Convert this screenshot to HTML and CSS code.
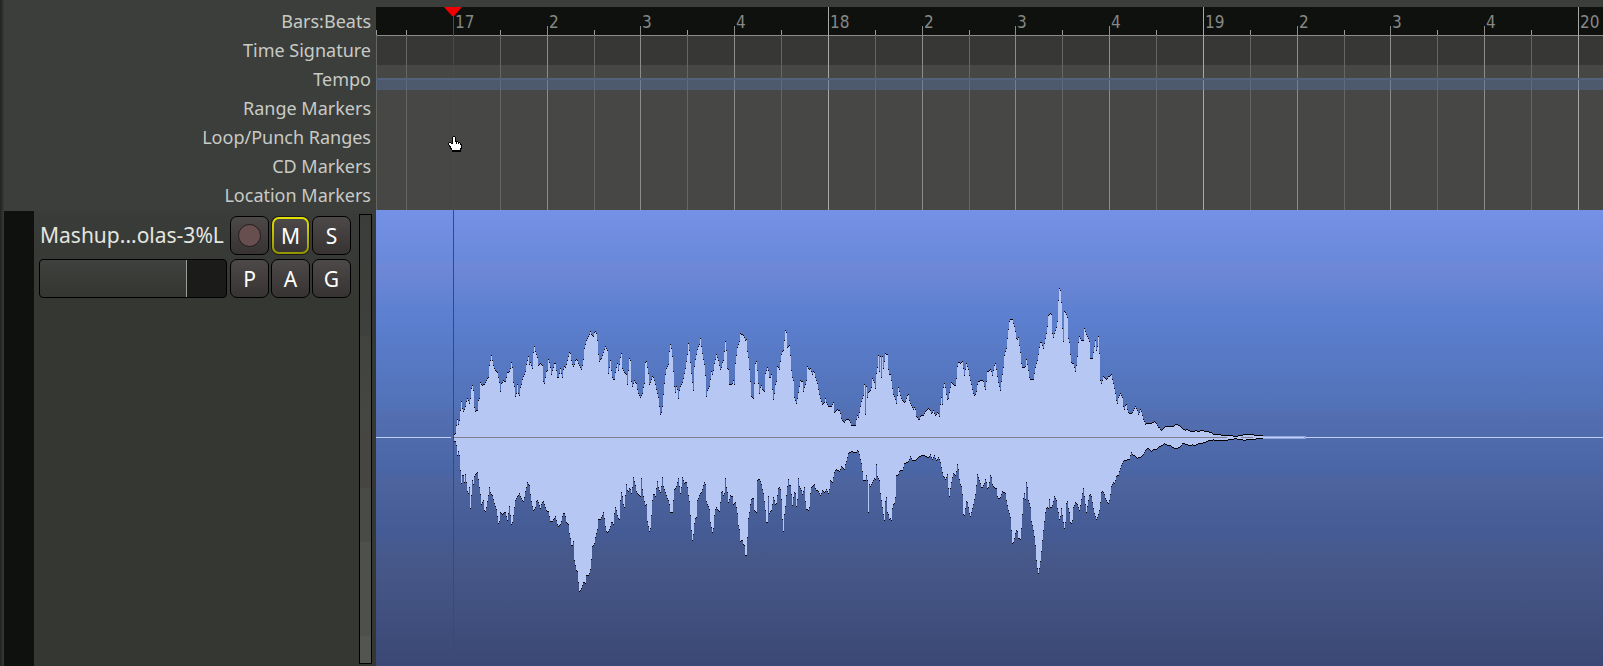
FILE: index.html
```html
<!DOCTYPE html>
<html lang="en">
<head>
<meta charset="utf-8">
<title>Editor</title>
<link rel="stylesheet" href="styles.css">
</head>
<body>
<main class="editor">
  <section class="rulers">
    <ul class="ruler-names">
      <li>Bars:Beats</li>
      <li>Time Signature</li>
      <li>Tempo</li>
      <li>Range Markers</li>
      <li>Loop/Punch Ranges</li>
      <li>CD Markers</li>
      <li>Location Markers</li>
    </ul>
    <div class="ruler-canvas" id="ruler">
      <div class="lane lane-bars"></div>
      <div class="lane lane-meter"></div>
      <div class="lane lane-tempo"><div class="tempo-curve"></div></div>
    </div>
  </section>
  <section class="track">
    <div class="track-strip"></div>
    <div class="track-header">
      <div class="controls">
        <span class="track-name">Mashup...olas-3%L</span>
        <button class="btn" type="button" aria-label="Record"><span class="rec-dot"></span></button>
        <button class="btn btn-mute" type="button" aria-pressed="true">M</button>
        <button class="btn" type="button">S</button>
        <input class="fader" type="range" min="0" max="100" value="79" aria-label="Gain">
        <button class="btn" type="button">P</button>
        <button class="btn" type="button">A</button>
        <button class="btn" type="button">G</button>
      </div>
      <div class="level"></div>
    </div>
    <div class="region">
      <svg class="wave" width="1227" height="456" shape-rendering="crispEdges" aria-hidden="true">
        <rect class="wave-axis" x="0" y="227" width="75" height="1"/>
        <rect class="wave-axis" x="930" y="227" width="4000" height="1"/>
        <rect class="wave-tail" x="887" y="226" width="43" height="3"/>
        <rect class="wave-axis" x="887" y="227" width="41" height="1"/>
        <path id="fill" class="wave-fill"/>
        <path id="edge" class="wave-edge"/>
        <rect class="wave-zero" x="78" y="227" width="773" height="1"/>
        <rect class="wave-zero" x="865" y="227" width="12" height="1"/>
      </svg>
    </div>
  </section>
  <div class="playhead">
    <svg class="playhead-cap" width="18" height="10" viewBox="0 0 18 10" aria-hidden="true"><path fill="#f00000" d="M0 0H18L10 9H8Z"/></svg>
  </div>
  <svg class="pointer" width="15" height="16" viewBox="0 0 15 16" shape-rendering="crispEdges" aria-hidden="true">
    <path fill="#000" d="M5 0H7V1H8V5H10V6H12V7H13V8H14V13H13V16H4V14H3V13H2V11H1V9H0V7H1V6H3V7H4V1H5z"/>
    <path fill="#fff" d="M5 1h2v5h1v2h1V6h1v2h1V7h1v2h1V8v4h-1v2H4v-2H3v-2H2V9H1V7h2v1h2z"/>
  </svg>
</main>
<script src="wave.js"></script>
</body>
</html>
```
FILE: styles.css
```css
* { box-sizing: border-box; }
body {
  margin: 0;
  background: #3c3e3b;
  font-family: "Noto Sans", sans-serif;
  overflow: hidden;
}
.editor {
  position: relative;
  display: flex;
  flex-direction: column;
  min-height: 100vh;
  padding-top: 7px;
  background: linear-gradient(90deg, #222221, #333331 3px, #3c3e3b 4px);
}
.rulers {
  display: grid;
  grid-template-columns: 376px 1fr;
}
.ruler-names {
  margin: 0;
  padding: 0 5px 0 0;
  list-style: none;
  text-align: right;
  color: #c8cac6;
  font-size: 18px;
  line-height: 29px;
}
.ruler-canvas {
  position: relative;
  display: flex;
  flex-direction: column;
  background: #474745;
  overflow: hidden;
}
.lane-bars { height: 29px; background: #0f110e; border-bottom: 1px solid #8b8b89; }
.lane-meter { height: 29px; background: #373735; }
.lane-tempo { position: relative; z-index: 1; height: 25px; padding-top: 13px; }
.tempo-curve {
  height: 12px;
  background: rgba(84, 110, 156, .45);
  border-top: 2px solid #53617a;
}
.tick { position: absolute; top: 0; bottom: 0; width: 1px; background: #a8a8a6; }
.tick-beat { top: 19px; background: #8c8c8a; }
.tick-half { top: 23px; background: linear-gradient(#9a9a98 5px, #666664 5px); }
.tick-label {
  position: absolute;
  left: 2px;
  top: 6px;
  color: #868884;
  font: 17px/18px "DejaVu Sans Condensed", "DejaVu Sans", sans-serif;
}
.tick-beat .tick-label { top: -13px; }

.track {
  flex: 1;
  display: grid;
  grid-template-columns: 30px 342px 1fr;
  margin-left: 4px;
  min-height: 456px;
}
.track-strip { margin-top: 1px; background: #0f110e; }
.track-header {
  display: flex;
  gap: 8px;
  padding: 4px 4px 2px 5px;
  border-top: 1px solid #3c3e3b;
  background: linear-gradient(#3a3c39, #353733 90px, #353733);
}
.controls {
  flex: 1;
  display: grid;
  grid-template-columns: 1fr 39px 39px 39px;
  grid-auto-rows: 39px;
  gap: 4px 2px;
  align-content: start;
  padding-top: 1px;
}
.track-name {
  padding-left: 1px;
  color: #e4e6e0;
  font-size: 21px;
  line-height: 38px;
  white-space: nowrap;
}
.btn {
  display: flex;
  align-items: center;
  justify-content: center;
  padding: 0;
  border: 1px solid #000;
  border-radius: 7px;
  background: linear-gradient(#4d4948, #373332);
  color: #fff;
  font: 21px/30px "Noto Sans", sans-serif;
}
.btn-mute {
  margin: 1px;
  border: 2px solid transparent;
  background: linear-gradient(#4d4948, #373332) padding-box, linear-gradient(#e2e200, #939300) border-box;
  box-shadow: 0 0 0 1px #1a1a1a;
}
.rec-dot {
  width: 23px;
  height: 23px;
  border: 1px solid #241c1c;
  border-radius: 50%;
  background: #684f4f;
}
.fader {
  appearance: none;
  width: auto;
  height: 39px;
  margin: 0 1px 0 0;
  border: 1px solid #000;
  border-radius: 4px;
  background:
    linear-gradient(90deg, transparent 79%, #1b1c1a 79%),
    linear-gradient(#3f413e, #343632);
}
.fader::-webkit-slider-thumb { appearance: none; width: 1px; height: 37px; background: #9a9c98; }
.level {
  width: 13px;
  margin-top: -1px;
  border: 1px solid #000;
  background: linear-gradient(#3b3d3a, #3e403d 27%, #41433f 27%, #454743 48%, #474541 48%, #474541 61%, #494b47 61%, #494b47 73%, #4e504c 73%, #4e504c 94%, #535551 94%);
}
.region {
  overflow: hidden;
  background: linear-gradient(#7491e6, #6b89da 50px, #6f88d7 56px, #5c7fcf 107px, #5272b8 195px, #546fb1 203px, #4a66a6 260px, #4d649f 270px, #445b95 323px, #47598b 343px, #3b4875 456px);
}
.wave { display: block; }
.wave-fill { fill: #b6c7f4; }
.wave-edge { fill: #000; }
.wave-axis { fill: #c0cff6; }
.wave-tail { fill: #8fa6de; }
.wave-zero { fill: #7f7f8e; }

.playhead {
  position: absolute;
  top: 7px;
  bottom: 0;
  left: 453px;
  width: 1px;
}
.playhead::after {
  content: "";
  position: absolute;
  inset: 0;
  background: #2340e6;
}
.playhead-cap { position: absolute; top: 0; left: -9px; }
.pointer { position: absolute; left: 448px; top: 136px; }
```
FILE: wave.js
```js
const ruler = document.getElementById('ruler');

function addTick(x, kind, label) {
  const tick = document.createElement('div');
  tick.className = 'tick tick-' + kind;
  tick.style.left = x + 'px';
  if (label) {
    const text = document.createElement('span');
    text.className = 'tick-label';
    text.textContent = label;
    tick.append(text);
  }
  ruler.append(tick);
}

// One bar is 375px wide; bar 17 begins 77px into the canvas.
function drawTicks() {
  ruler.querySelectorAll('.tick').forEach(tick => tick.remove());
  addTick(0, 'half');
  for (let k = -1; ; k++) {
    const x = 77 + Math.round(k * 46.875 - 0.1);
    if (x >= ruler.clientWidth) break;
    if (k % 8 === 0) addTick(x, 'bar', String(17 + k / 8));
    else if (k % 2 === 0) addTick(x, 'beat', String(1 + (k % 8) / 2));
    else addTick(x, 'half');
  }
}
drawTicks();
window.addEventListener('resize', drawTicks);

// Peak data in thirds of a pixel. Each block: canvas offset, zero level,
// first and last sample, then "time,level" pairs for both envelopes.
const blocks = [
  { at: 69, zero: 352, from: 27, to: 600,
    up: '26,346 32,340 34,316 37,298 40,312 43,300 46,270 49,244 52,265 55,274 60,264 64,244 67,236 72,244 74,258 76,236 79,206 82,197 85,212 88,262 91,274 97,270 100,242 103,236 106,188 112,196 120,190 127,176 131,172 133,136 136,122 139,106 142,122 145,136 149,148 157,156 160,172 163,186 166,214 169,190 172,188 176,180 180,190 183,176 187,158 193,154 196,146 199,127 202,142 205,188 208,200 211,228 215,216 217,192 220,220 223,226 226,202 230,190 233,172 240,160 244,134 250,110 253,134 256,127 262,146 265,96 268,79 271,95 277,112 280,136 287,130 292,136 296,200 300,180 303,154 307,152 310,118 314,128 318,154 319,162 325,142 328,130 332,130 335,160 338,180 343,160 346,146 352,172 356,138 362,142 368,118 373,97 377,102 380,130 386,142 392,115 397,122 403,136 409,148 412,136 415,118 418,86 424,62 430,50 436,34 440,44 445,48 448,36 453,34 457,60 460,103 463,124 470,112 475,98 481,80 488,94 490,160 496,122 499,152 503,178 508,178 512,150 517,130 520,152 526,112 529,100 532,146 538,158 544,164 547,193 550,150 553,115 557,124 559,184 562,200 568,182 574,190 578,214 586,233 592,220 597,190',
    down: '26,362 32,364 34,376 37,406 40,394 43,406 46,450 49,490 52,466 56,466 58,488 61,464 64,488 67,514 70,520 73,502 76,564 79,526 82,480 86,496 88,468 92,462 98,457 102,496 106,524 109,552 115,542 118,572 122,576 126,548 130,526 133,502 137,520 142,526 148,550 154,568 160,610 163,604 166,576 172,584 180,574 187,602 193,560 196,586 199,614 203,604 206,576 211,542 217,528 222,526 223,520 230,538 236,546 240,520 243,506 247,487 253,496 256,524 260,550 266,574 271,562 275,536 280,546 286,566 290,550 295,544 300,560 304,572 311,576 315,602 320,606 325,598 331,590 336,610 340,620 348,610 352,588 356,577 360,582 364,606 370,612 373,640 376,656 380,684 385,664 388,722 394,750 398,754 400,788 403,814 409,806 415,786 421,790 424,766 431,766 436,748 440,706 442,680 448,670 452,646 457,628 460,598 468,596 475,577 479,602 482,628 486,640 493,628 500,604 505,612 509,570 512,560 518,592 523,598 526,540 530,508 534,550 538,562 544,492 548,518 554,502 560,524 565,472 571,496 574,514 580,524 586,528 589,476 592,508 597,544' },
  { at: 269, zero: 352, from: 0, to: 600,
    up: '0,128 4,124 10,160 13,194 19,178 23,164 30,188 35,214 40,232 46,284 51,272 54,236 56,212 60,170 64,146 70,134 73,94 76,73 80,88 83,118 86,172 88,200 90,222 94,200 97,208 100,236 104,204 112,188 120,152 125,118 128,96 130,70 134,98 137,140 140,170 145,212 148,140 152,112 157,88 163,72 166,56 169,80 173,106 178,134 182,178 184,230 188,206 193,200 199,154 203,166 208,130 214,103 220,122 227,152 232,128 235,122 238,94 241,65 244,92 247,146 251,148 253,192 260,194 265,182 268,194 271,130 277,82 284,60 286,40 293,44 300,54 302,70 304,58 307,94 310,112 314,158 316,184 319,228 325,236 328,190 331,130 334,125 337,152 340,190 343,220 348,192 352,208 358,214 361,160 367,142 371,152 374,180 379,163 382,208 385,238 389,212 391,194 394,184 397,140 404,148 406,124 410,96 415,90 418,62 421,32 425,40 427,82 434,76 437,122 440,166 445,182 448,232 454,250 458,230 461,212 467,176 470,188 473,182 475,214 480,196 485,178 487,140 493,148 494,140 503,166 506,148 511,172 517,190 520,208 526,236 532,254 538,248 541,236 545,252 552,260 560,258 565,247 568,278 576,268 584,272 590,298 598,306',
    down: '0,556 4,552 7,604 13,634 17,622 19,586 22,540 26,518 31,528 37,484 41,506 47,518 52,472 55,500 60,514 66,532 72,546 76,578 82,577 85,542 88,508 94,500 100,474 104,508 107,524 112,472 118,490 125,486 130,526 134,550 137,606 140,644 142,661 146,638 149,598 154,592 157,542 163,526 170,514 178,486 182,496 184,544 190,560 194,570 196,608 202,638 205,626 208,586 212,560 218,568 223,574 226,546 230,506 235,526 238,520 241,474 244,502 248,520 250,548 256,526 262,530 265,552 271,546 277,580 280,616 284,630 286,664 292,660 295,674 299,678 301,706 305,706 306,676 309,600 314,572 317,544 320,535 326,535 328,572 334,578 337,480 344,478 349,494 355,520 358,544 361,570 364,606 368,606 370,530 373,580 380,568 385,532 391,552 394,550 397,526 401,496 406,508 409,538 412,598 415,634 418,584 421,558 425,514 430,478 434,502 437,494 440,538 443,566 446,514 451,520 454,558 458,530 460,476 464,508 467,502 472,524 478,502 481,544 484,568 490,570 494,560 497,502 508,494 512,508 520,514 526,526 532,512 538,518 545,508 551,523 556,482 562,488 568,458 573,448 583,454 589,440 597,448' },
  { at: 469, zero: 472, from: 0, to: 600,
    up: '0,422 8,416 15,422 17,434 24,436 32,436 36,402 40,412 43,396 49,364 55,346 58,314 61,404 64,320 67,352 70,336 78,330 82,296 88,308 91,326 94,280 97,262 100,226 103,274 106,228 109,292 112,230 115,264 118,244 121,220 127,224 130,268 133,284 138,284 140,316 145,342 150,352 154,370 160,322 166,346 172,362 180,368 186,348 190,344 194,368 200,376 206,392 209,376 214,408 222,422 228,404 234,408 240,396 250,384 256,390 260,402 265,392 272,408 278,394 283,408 286,374 290,346 292,374 295,322 298,310 301,322 306,358 310,356 313,338 319,308 326,314 332,318 337,260 341,244 347,250 352,244 358,286 364,250 370,268 374,292 380,318 386,346 393,342 398,306 407,300 414,300 418,320 422,330 426,276 434,270 437,266 443,290 446,262 451,250 456,282 460,308 466,330 470,296 475,262 478,226 484,204 487,174 491,140 494,118 502,118 508,140 512,158 515,182 520,172 524,202 527,226 530,260 534,264 541,258 544,238 550,270 554,298 565,298 571,262 577,240 580,222 585,188 589,186 595,206 598,190',
    down: '0,554 5,542 10,520 20,514 28,518 34,516 38,508 43,524 49,550 52,574 55,600 62,602 66,570 70,698 72,612 76,620 82,606 88,594 91,598 94,554 97,588 103,600 106,640 110,668 113,690 118,720 121,664 125,646 127,698 132,704 134,730 137,706 139,722 143,674 149,668 152,646 154,586 160,584 164,572 173,570 178,550 184,548 190,544 196,530 202,540 212,540 220,532 230,525 240,528 250,532 256,524 262,538 268,526 275,544 280,532 285,544 290,566 295,590 302,598 307,584 310,626 313,648 316,626 320,602 325,580 332,588 337,554 341,574 344,608 350,620 353,656 355,702 359,706 362,676 365,656 370,682 375,712 379,698 385,672 390,650 394,616 397,584 403,600 410,624 416,616 422,594 428,630 433,608 437,580 442,612 446,622 454,626 458,656 466,652 472,634 481,640 485,668 490,690 496,712 499,752 502,790 506,786 512,756 516,748 520,774 526,778 530,732 535,656 538,640 541,658 544,608 548,626 551,680 555,662 558,720 565,750 570,780 574,840 577,866 580,880 583,864 587,838 592,780 598,724' },
  { at: 624, zero: 472, from: 135, to: 480,
    up: '135,178 139,160 142,138 145,106 151,100 155,104 157,160 160,172 166,150 171,138 173,110 175,62 178,26 181,30 184,66 187,146 190,184 193,94 198,98 202,112 205,174 208,188 211,224 214,248 220,250 226,274 230,250 232,230 234,194 238,170 245,184 250,180 253,146 258,160 264,172 268,184 270,235 277,235 281,210 286,182 290,220 295,170 298,220 300,298 304,310 310,290 316,296 320,300 324,290 330,288 334,284 339,306 345,334 349,360 352,370 355,352 361,340 367,352 370,378 373,388 378,370 383,392 388,401 395,400 400,390 406,380 412,392 415,403 421,388 426,400 430,418 436,432 444,430 450,432 455,428 463,424 470,430 474,440 480,445',
    down: '133,730 136,698 140,682 146,684 148,658 152,688 158,674 163,650 169,662 172,684 176,702 179,728 184,684 189,720 193,746 197,720 200,644 204,682 208,698 212,736 217,722 220,682 226,668 232,674 238,692 242,670 247,640 250,626 254,658 259,698 263,672 269,640 275,652 278,676 284,704 290,720 296,700 300,682 302,650 305,632 312,640 317,658 322,668 326,672 330,652 334,620 340,606 344,612 349,588 355,586 360,568 366,550 372,542 388,537 394,516 398,524 404,526 412,534 424,530 430,522 438,508 445,505 453,514 460,508 470,508 480,498' },
  { at: 754, zero: 232, from: 90, to: 399,
    up: '84,202 94,210 104,200 118,198 130,198 138,193 148,196 152,200 164,210 172,209 182,214 200,212 206,214 214,211 232,214 240,216 250,222 266,224 290,226 306,227 316,230 330,226 345,223 368,223 374,226 398,227',
    down: '90,258 98,256 104,250 112,256 122,257 132,264 140,265 150,260 158,250 166,252 178,256 186,254 194,257 202,252 212,250 226,246 238,241 250,239 262,241 290,240 306,238 316,235 330,239 345,240 354,238 376,238 380,235 398,235' }
];

const ZERO_ROW = 227;
const parse = s => s.split(' ').map(p => p.split(',').map(Number));

function levelAt(points, t) {
  if (t <= points[0][0]) return points[0][1];
  for (let i = 1; i < points.length; i++) {
    const [x1, y1] = points[i];
    if (t <= x1) {
      const [x0, y0] = points[i - 1];
      return y0 + (y1 - y0) * (t - x0) / (x1 - x0);
    }
  }
  return points[points.length - 1][1];
}

let fill = '';
let edge = '';
for (const block of blocks) {
  const up = parse(block.up);
  const down = parse(block.down);
  for (let t = block.from; t < block.to; t += 3) {
    const x = block.at + t / 3;
    const top = ZERO_ROW + Math.round((levelAt(up, t + 1) - block.zero) / 3);
    const bottom = ZERO_ROW + Math.round((levelAt(down, t + 1) - block.zero) / 3);
    fill += `M${x} ${top}h1V${bottom + 1}h-1z`;
    edge += `M${x} ${top}h1v1h-1zM${x} ${bottom}h1v1h-1z`;
  }
}
document.getElementById('fill').setAttribute('d', fill);
document.getElementById('edge').setAttribute('d', edge);
```
